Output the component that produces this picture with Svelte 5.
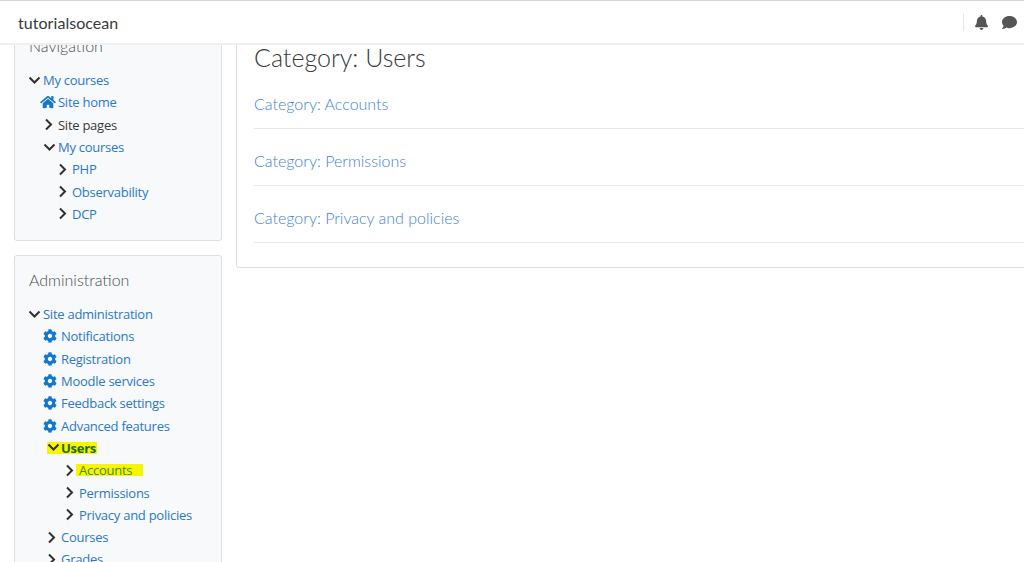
<script>
  const navRows = [
    { label: 'My courses', x: 28, box: 15, icon: 'down', link: true },
    { label: 'Site home', x: 40, box: 18, icon: 'home', link: true },
    { label: 'Site pages', x: 44, box: 14, icon: 'right', link: false },
    { label: 'My courses', x: 43, box: 15, icon: 'down', link: true },
    { label: 'PHP', x: 58, box: 14, icon: 'right', link: true },
    { label: 'Observability', x: 58, box: 14, icon: 'right', link: true },
    { label: 'DCP', x: 58, box: 14, icon: 'right', link: true }
  ];

  const adminRows = [
    { label: 'Site administration', x: 28, box: 15, icon: 'down', link: true },
    { label: 'Notifications', x: 43, box: 18, icon: 'cog', link: true },
    { label: 'Registration', x: 43, box: 18, icon: 'cog', link: true },
    { label: 'Moodle services', x: 43, box: 18, icon: 'cog', link: true },
    { label: 'Feedback settings', x: 43, box: 18, icon: 'cog', link: true },
    { label: 'Advanced features', x: 43, box: 18, icon: 'cog', link: true },
    { label: 'Users', x: 47, box: 14, icon: 'down', link: true, mark: 'users' },
    { label: 'Accounts', x: 65, box: 14, icon: 'right', link: true, mark: 'accounts' },
    { label: 'Permissions', x: 65, box: 14, icon: 'right', link: true },
    { label: 'Privacy and policies', x: 65, box: 14, icon: 'right', link: true },
    { label: 'Courses', x: 47, box: 14, icon: 'right', link: true },
    { label: 'Grades', x: 47, box: 14, icon: 'right', link: true }
  ];

  const categories = ['Accounts', 'Permissions', 'Privacy and policies'];
</script>

{#snippet treeIcon(name)}
  {#if name === 'down'}
    <svg class="chev" width="13" height="9" viewBox="0 0 13 9"><path d="M1.5 1.5 6.5 6.5 11.5 1.5" /></svg>
  {:else if name === 'right'}
    <svg class="chev" width="9" height="13" viewBox="0 0 9 13"><path d="M2 1.5 7 6.5 2 11.5" /></svg>
  {:else if name === 'home'}
    <svg class="solid" width="16" height="14" viewBox="0 0 576 512"><path d="M280.37 148.26L96 300.11V464a16 16 0 0 0 16 16l112.06-.29a16 16 0 0 0 15.92-16V368a16 16 0 0 1 16-16h64a16 16 0 0 1 16 16v95.64a16 16 0 0 0 16 16.05L464 480a16 16 0 0 0 16-16V300L295.67 148.26a12.19 12.19 0 0 0-15.3 0zM571.6 251.47L488 182.56V44.05a12 12 0 0 0-12-12h-56a12 12 0 0 0-12 12v72.61L318.47 43a48 48 0 0 0-61 0L4.34 251.47a12 12 0 0 0-1.6 16.9l25.5 31A12 12 0 0 0 45.15 301l235.22-193.74a12.19 12.19 0 0 1 15.3 0L530.9 301a12 12 0 0 0 16.9-1.6l25.5-31a12 12 0 0 0-1.7-16.93z" /></svg>
  {:else if name === 'cog'}
    <svg class="solid" width="14" height="14" viewBox="0 0 512 512"><path d="M487.4 315.7l-42.6-24.6c4.3-23.2 4.3-47 0-70.2l42.6-24.6c4.9-2.8 7.1-8.6 5.5-14-11.1-35.6-30-67.8-54.7-94.6-3.8-4.1-10-5.1-14.8-2.3L380.8 110c-17.9-15.4-38.5-27.3-60.8-35.1V25.8c0-5.6-3.9-10.5-9.4-11.7-36.7-8.2-74.3-7.8-109.2 0-5.5 1.2-9.4 6.1-9.4 11.7V75c-22.2 7.9-42.8 19.8-60.8 35.1L88.7 85.5c-4.9-2.8-11-1.9-14.8 2.3-24.7 26.7-43.6 58.9-54.7 94.6-1.7 5.4.6 11.2 5.5 14L67.3 221c-4.3 23.2-4.3 47 0 70.2l-42.6 24.6c-4.9 2.8-7.1 8.6-5.5 14 11.1 35.6 30 67.8 54.7 94.6 3.8 4.1 10 5.1 14.8 2.3l42.6-24.6c17.9 15.4 38.5 27.3 60.8 35.1v49.2c0 5.6 3.9 10.5 9.4 11.7 36.7 8.2 74.3 7.8 109.2 0 5.5-1.2 9.4-6.1 9.4-11.7v-49.2c22.2-7.9 42.8-19.8 60.8-35.1l42.6 24.6c4.9 2.8 11 1.9 14.8-2.3 24.7-26.7 43.6-58.9 54.7-94.6 1.5-5.5-.7-11.3-5.6-14.1zM256 336c-44.1 0-80-35.9-80-80s35.9-80 80-80 80 35.9 80 80-35.9 80-80 80z" /></svg>
  {/if}
{/snippet}

{#snippet tree(rows)}
  <ul class="tree">
    {#each rows as r}
      <li class="row" style="padding-left: {r.x}px">
        <span class="icon-box {r.mark ?? ''}" style="width: {r.box}px">{@render treeIcon(r.icon)}</span>
        <span class="label {r.mark ?? ''}" class:link={r.link}>{r.label}</span>
      </li>
    {/each}
  </ul>
{/snippet}

<div class="page">
  <header class="topbar">
    <span class="brand">tutorialsocean</span>
    <div class="tools">
      <span class="divider"></span>
      <svg class="bell" width="13" height="15" viewBox="0 0 448 512"><path d="M224 512c35.32 0 63.97-28.65 63.97-64H160.03c0 35.35 28.65 64 63.97 64zm215.39-149.71c-19.32-20.76-55.47-51.99-55.47-154.29 0-77.7-54.48-139.9-127.94-155.16V32c0-17.67-14.32-32-31.98-32s-31.98 14.33-31.98 32v20.84C118.56 68.1 64.08 130.3 64.08 208c0 102.3-36.15 133.53-55.47 154.29-6 6.45-8.66 14.16-8.61 21.71.11 16.4 12.98 32 32.1 32h383.8c19.12 0 32-15.6 32.1-32 .05-7.55-2.61-15.27-8.61-21.71z" /></svg>
      <svg class="comment" width="15" height="15" viewBox="0 0 512 512"><path d="M256 32C114.6 32 0 125.1 0 240c0 49.6 21.4 95 57 130.7C44.5 421.1 2.7 466 2.2 466.5c-2.2 2.3-2.8 5.7-1.5 8.7S4.8 480 8 480c66.3 0 116-31.8 140.6-51.4 32.7 12.3 69 19.4 107.4 19.4 141.4 0 256-93.1 256-208S397.4 32 256 32z" /></svg>
    </div>
  </header>

  <div class="layout">
    <aside class="sidebar">
      <section class="block nav-block">
        <h5>Navigation</h5>
        {@render tree(navRows)}
      </section>
      <section class="block admin-block">
        <h5>Administration</h5>
        {@render tree(adminRows)}
      </section>
    </aside>

    <main class="content">
      <h2>Category: Users</h2>
      {#each categories as c}
        <div class="category">Category: {c}</div>
      {/each}
    </main>
  </div>
</div>

<style>
  :global(body) {
    margin: 0;
    background: #fff;
  }

  .page {
    position: relative;
    width: 1024px;
    height: 562px;
    overflow: hidden;
    font-family: 'Open Sans', 'Lato', sans-serif;
    font-size: 13px;
    letter-spacing: -0.26px;
    color: #373a3c;
  }

  /* fixed navbar, the page has scrolled underneath it */
  .topbar {
    position: absolute;
    top: 0;
    left: 0;
    right: 0;
    z-index: 2;
    height: 44px;
    box-sizing: border-box;
    display: flex;
    align-items: center;
    justify-content: space-between;
    padding: 0 7px 0 18px;
    background: #fff;
    border-top: 1px solid #d6d6d6;
    border-bottom: 1px solid #f0f0f0;
    box-shadow: 0 1px 0 #f0f0f0;
  }

  .brand {
    font-family: 'Lato', sans-serif;
    font-size: 16px;
    letter-spacing: 0.05px;
    color: #373a3c;
  }

  .tools {
    display: flex;
    align-items: center;
  }

  .divider {
    width: 1px;
    height: 18px;
    background: #e4e8ec;
    margin-right: 11px;
  }

  .bell,
  .comment {
    fill: #555;
  }

  .comment {
    margin-left: 14px;
  }

  .layout {
    display: grid;
    grid-template-columns: 208px 800px;
    column-gap: 14px;
    padding: 21px 0 0 14px;
  }

  .sidebar {
    display: flex;
    flex-direction: column;
    gap: 14px;
  }

  .block {
    box-sizing: border-box;
    background: #f8f9fa;
    border: 1px solid #dcdfe2;
    border-radius: 3px;
  }

  .nav-block {
    height: 220px;
  }

  h5 {
    margin: 0;
    padding: 13px 0 0 14px;
    font-family: 'Lato', sans-serif;
    font-size: 16px;
    font-weight: 300;
    letter-spacing: 0;
    line-height: 21px;
    color: #4a4d50;
  }

  .tree {
    list-style: none;
    margin: 13px 0 0;
    padding: 0;
  }

  .row {
    display: flex;
    align-items: center;
    height: 22.3px;
    margin-left: -15px;
    white-space: nowrap;
  }

  .icon-box {
    display: flex;
    align-items: center;
    justify-content: flex-start;
    height: 100%;
    flex: none;
  }

  .icon-box.users {
    height: 12px;
    background: #f6f600;
  }

  .chev {
    fill: none;
    stroke: #33302c;
    stroke-width: 2;
  }

  .solid {
    fill: #1177d1;
  }

  .label.link {
    color: #2a78c8;
  }

  .label.users {
    background: #f6f600;
    color: #1c6a10;
    font-weight: 700;
    line-height: 12px;
    padding-right: 1px;
  }

  .label.accounts {
    background: #f6f600;
    color: #4d8a1e;
    line-height: 12px;
    margin-left: -3px;
    padding: 0 11px 0 3px;
  }

  .content {
    box-sizing: border-box;
    height: 247px;
    padding: 17px 0 0 17px;
    background: #fff;
    border: 1px solid #dcdfe2;
    border-radius: 3px;
  }

  h2 {
    margin: 0;
    font-family: 'Lato', sans-serif;
    font-size: 25px;
    font-weight: 300;
    letter-spacing: 0;
    line-height: 36px;
    color: #373a3c;
  }

  .category {
    height: 57px;
    box-sizing: border-box;
    padding-top: 20px;
    line-height: 24px;
    font-family: 'Lato', sans-serif;
    font-size: 16px;
    font-weight: 300;
    letter-spacing: 0;
    color: #3f82d2;
    border-bottom: 1px solid #e5e7e9;
  }

  h2 + .category {
    height: 54px;
    padding-top: 17px;
  }
</style>
